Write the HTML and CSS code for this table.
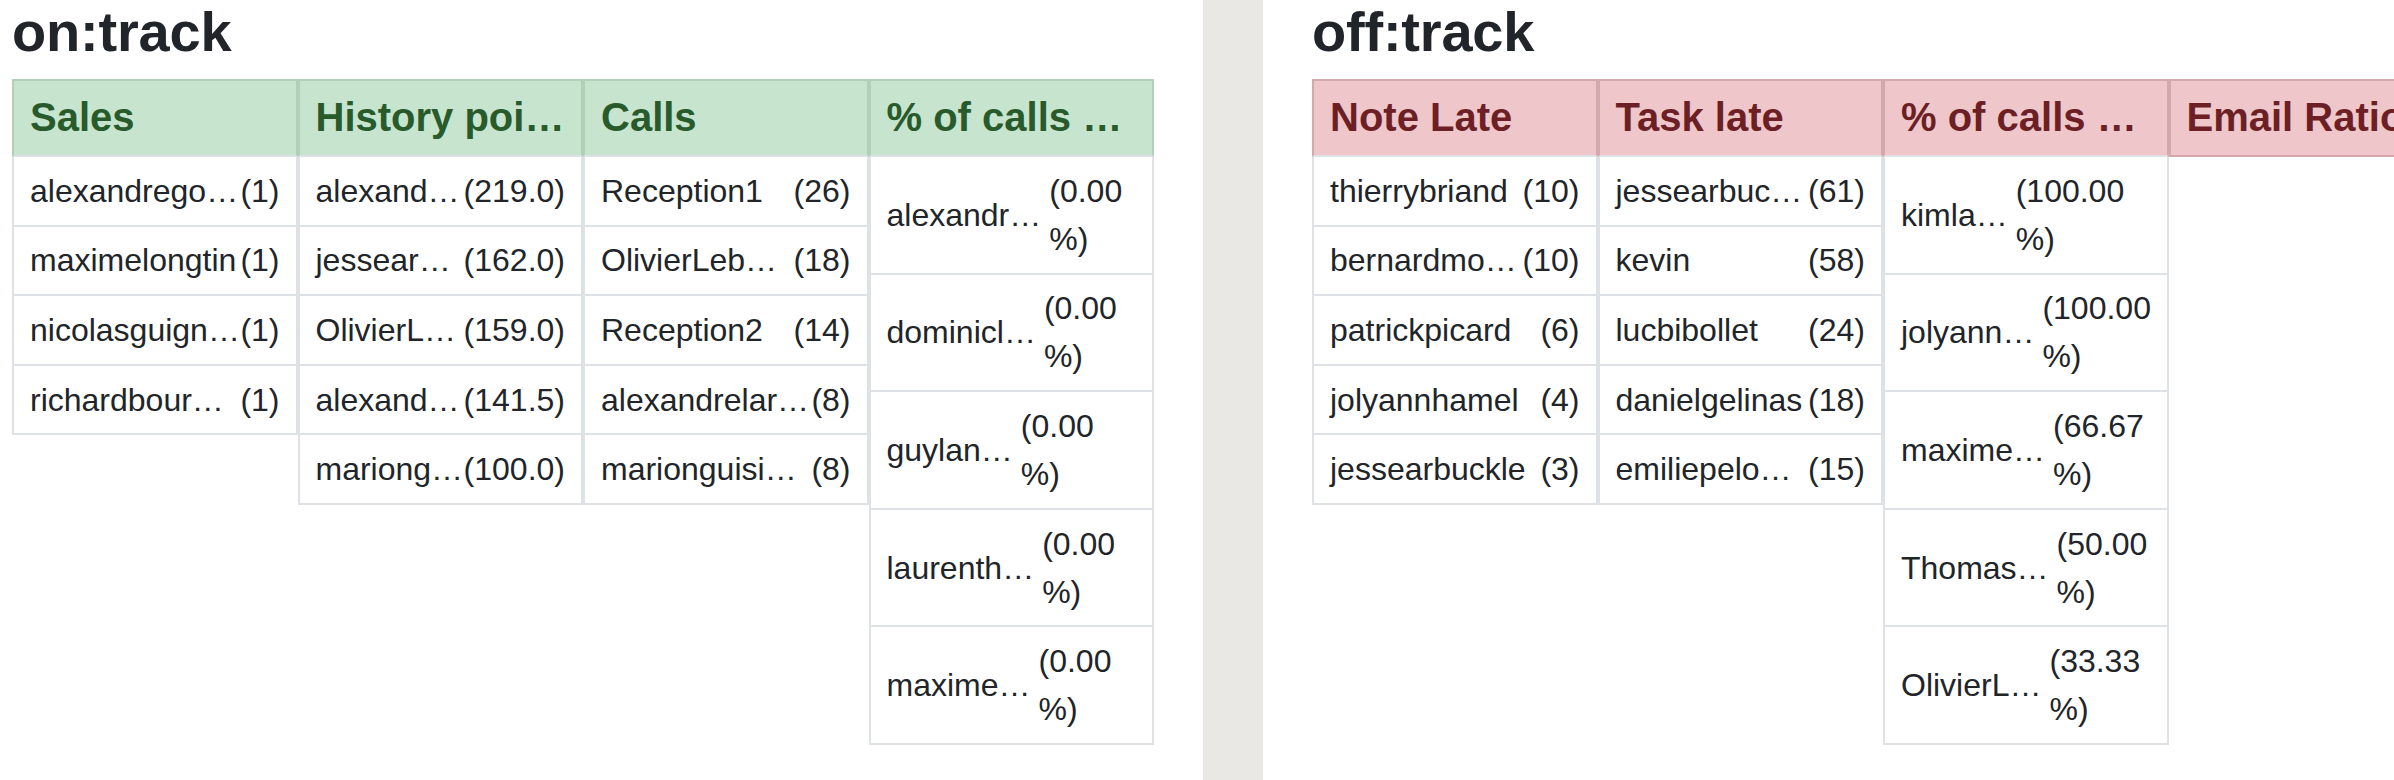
FILE: index.html
```html
<!DOCTYPE html>
<html lang="en">
<head>
<meta charset="utf-8">
<title>Tracking</title>
<link rel="stylesheet" href="styles.css">
</head>
<body>
<div class="page">
  <section class="panel panel-on">
    <h2 class="title">on:track</h2>
    <div class="cols">
      <div class="col">
        <div class="col-head">Sales</div>
        <div class="col-row"><span class="name">alexandrego…</span><span class="count">(1)</span></div>
        <div class="col-row"><span class="name">maximelongtin</span><span class="count">(1)</span></div>
        <div class="col-row"><span class="name">nicolasguign…</span><span class="count">(1)</span></div>
        <div class="col-row"><span class="name">richardbour…</span><span class="count">(1)</span></div>
      </div>
      <div class="col">
        <div class="col-head">History poi…</div>
        <div class="col-row"><span class="name">alexand…</span><span class="count">(219.0)</span></div>
        <div class="col-row"><span class="name">jessear…</span><span class="count">(162.0)</span></div>
        <div class="col-row"><span class="name">OlivierL…</span><span class="count">(159.0)</span></div>
        <div class="col-row"><span class="name">alexand…</span><span class="count">(141.5)</span></div>
        <div class="col-row"><span class="name">mariong…</span><span class="count">(100.0)</span></div>
      </div>
      <div class="col">
        <div class="col-head">Calls</div>
        <div class="col-row"><span class="name">Reception1</span><span class="count">(26)</span></div>
        <div class="col-row"><span class="name">OlivierLeb…</span><span class="count">(18)</span></div>
        <div class="col-row"><span class="name">Reception2</span><span class="count">(14)</span></div>
        <div class="col-row"><span class="name">alexandrelar…</span><span class="count">(8)</span></div>
        <div class="col-row"><span class="name">marionguisi…</span><span class="count">(8)</span></div>
      </div>
      <div class="col col-wrap">
        <div class="col-head">% of calls …</div>
        <div class="col-row"><span class="name">alexandr…</span><span class="count">(0.00 %)</span></div>
        <div class="col-row"><span class="name">dominicl…</span><span class="count">(0.00 %)</span></div>
        <div class="col-row"><span class="name">guylan…</span><span class="count">(0.00 %)</span></div>
        <div class="col-row"><span class="name">laurenth…</span><span class="count">(0.00 %)</span></div>
        <div class="col-row"><span class="name">maxime…</span><span class="count">(0.00 %)</span></div>
      </div>
    </div>
  </section>
  <div class="divider"></div>
  <section class="panel panel-off">
    <h2 class="title">off:track</h2>
    <div class="cols">
      <div class="col">
        <div class="col-head">Note Late</div>
        <div class="col-row"><span class="name">thierrybriand</span><span class="count">(10)</span></div>
        <div class="col-row"><span class="name">bernardmo…</span><span class="count">(10)</span></div>
        <div class="col-row"><span class="name">patrickpicard</span><span class="count">(6)</span></div>
        <div class="col-row"><span class="name">jolyannhamel</span><span class="count">(4)</span></div>
        <div class="col-row"><span class="name">jessearbuckle</span><span class="count">(3)</span></div>
      </div>
      <div class="col">
        <div class="col-head">Task late</div>
        <div class="col-row"><span class="name">jessearbuc…</span><span class="count">(61)</span></div>
        <div class="col-row"><span class="name">kevin</span><span class="count">(58)</span></div>
        <div class="col-row"><span class="name">lucbibollet</span><span class="count">(24)</span></div>
        <div class="col-row"><span class="name">danielgelinas</span><span class="count">(18)</span></div>
        <div class="col-row"><span class="name">emiliepelo…</span><span class="count">(15)</span></div>
      </div>
      <div class="col col-wrap">
        <div class="col-head">% of calls …</div>
        <div class="col-row"><span class="name">kimla…</span><span class="count">(100.00 %)</span></div>
        <div class="col-row"><span class="name">jolyann…</span><span class="count">(100.00 %)</span></div>
        <div class="col-row"><span class="name">maxime…</span><span class="count">(66.67 %)</span></div>
        <div class="col-row"><span class="name">Thomas…</span><span class="count">(50.00 %)</span></div>
        <div class="col-row"><span class="name">OlivierL…</span><span class="count">(33.33 %)</span></div>
      </div>
      <div class="col">
        <div class="col-head">Email Ratio</div>
      </div>
    </div>
  </section>
</div>
</body>
</html>
```
FILE: styles.css
```css
* { box-sizing: border-box; }

html, body {
  margin: 0;
  padding: 0;
  background: #ffffff;
  overflow: hidden;
}

body {
  font-family: "Liberation Sans", Arial, Helvetica, sans-serif;
  color: #212529;
}

.page {
  display: flex;
  height: 780px;
  width: 2394px;
  overflow: hidden;
}

.panel {
  display: flex;
  flex-direction: column;
  min-width: 0;
}

.panel-on {
  flex: 0 0 1203px;
  padding-left: 12px;
}

.panel-off {
  flex: 1 1 auto;
  padding-left: 49px;
  overflow: hidden;
}

.divider {
  flex: 0 0 60px;
  background: #e9e8e4;
}

.title {
  margin: 0 0 16px;
  font-size: 56px;
  line-height: 63px;
  font-weight: 700;
  letter-spacing: -0.2px;
  color: #212529;
}

.cols {
  display: flex;
  align-items: flex-start;
}

.col {
  flex: 0 0 285.5px;
  width: 285.5px;
}

.col-head {
  padding: 12px 16px 14px;
  font-size: 40px;
  line-height: 48px;
  font-weight: 700;
  white-space: nowrap;
  overflow: hidden;
  border: 2px solid;
  border-bottom-color: #dee2e6;
}

.panel-on .col-head {
  background: #c7e5ce;
  color: #285a2c;
  border-color: #b3cfb8;
  border-bottom-color: #dee2e6;
}

.panel-off .col-head {
  background: #efc7cb;
  color: #6c1f25;
  border-color: #d4a9ae;
  border-bottom-color: #dee2e6;
}

.panel-off .col-head:only-child {
  border-bottom-color: #d4a9ae;
}

.col-row {
  display: flex;
  align-items: center;
  padding: 9.8px 16px;
  font-size: 32px;
  line-height: 48px;
  border: 2px solid #dee2e6;
  border-top: none;
  color: #212529;
}

.name {
  flex: 0 0 auto;
  white-space: nowrap;
}

.count {
  flex: 0 0 auto;
  margin-left: auto;
  white-space: nowrap;
}

.col-wrap .count {
  flex: 0 1 auto;
  min-width: 0;
  margin-left: 8px;
  white-space: normal;
}
```
